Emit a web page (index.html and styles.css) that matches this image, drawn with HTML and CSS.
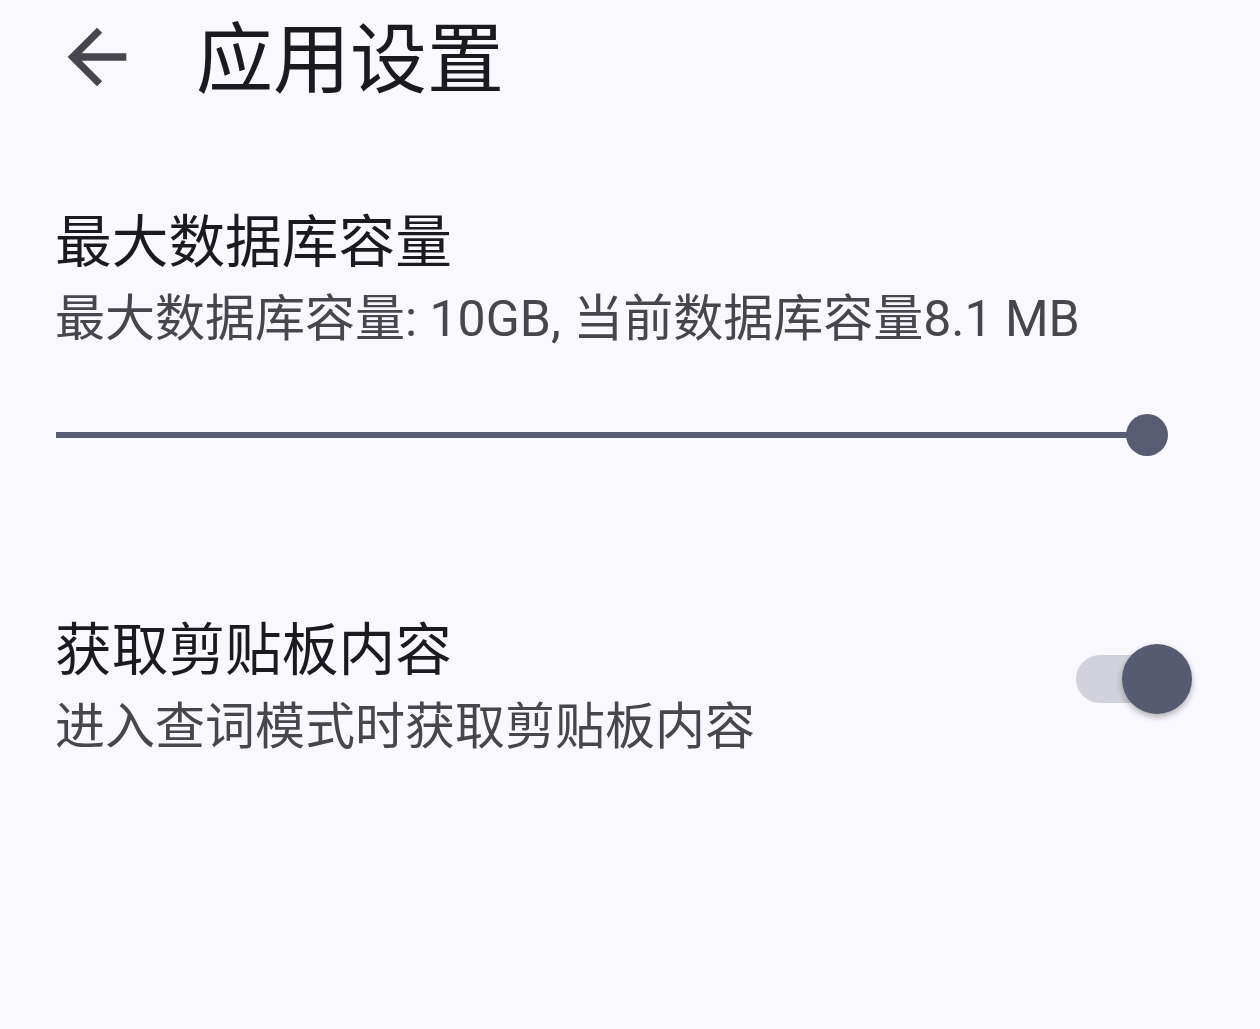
FILE: index.html
```html
<!DOCTYPE html>
<html>
<head>
    <title>应用设置</title>
    <meta name="viewport" content="width=device-width, initial-scale=1">
    <link rel="stylesheet" href="styles.css">
</head>
<body>
    <header class="top-bar">
        <button class="back" aria-label="返回">
            <svg viewBox="0 0 24 24" width="88" height="88">
                <path d="M20 11H7.83l5.59-5.59L12 4l-8 8 8 8 1.41-1.41L7.83 13H20v-2z" fill="#46464f"/>
            </svg>
        </button>
        <h1>应用设置</h1>
    </header>

    <section class="pref pref-slider">
        <div class="pref-title">最大数据库容量</div>
        <div class="pref-summary">最大数据库容量: 10GB, 当前数据库容量8.1 MB</div>
        <div class="slider">
            <div class="slider-track"></div>
            <div class="slider-thumb"></div>
        </div>
    </section>

    <section class="pref pref-switch">
        <div class="pref-text">
            <div class="pref-title">获取剪贴板内容</div>
            <div class="pref-summary">进入查词模式时获取剪贴板内容</div>
        </div>
        <div class="switch">
            <div class="switch-track"></div>
            <div class="switch-thumb"></div>
        </div>
    </section>
</body>
</html>
```

FILE: styles.css
```css
body {
    margin: 0;
    background-color: #f9f8fe;
    font-family: Roboto, "Noto Sans CJK SC", sans-serif;
    color: #1b1b1f;
}
.top-bar {
    height: 114px;
    display: flex;
    align-items: center;
}
.back {
    background: none;
    border: none;
    padding: 0;
    margin-left: 53px;
    width: 88px;
    height: 88px;
    display: flex;
}
h1 {
    margin: 0 0 0 55px;
    padding-top: 10px;
    font-size: 77px;
    font-weight: normal;
    line-height: 1.45;
}
.pref {
    padding: 0 68px 0 55px;
}
.pref-title {
    padding-top: 5px;
    font-size: 56.7px;
    line-height: 76px;
    color: #1b1b1f;
}
.pref-summary {
    font-size: 50px;
    line-height: 76px;
    color: #46464f;
}
.pref-slider {
    margin-top: 86px;
}
.slider {
    position: relative;
    height: 60px;
    margin-top: 48px;
    margin-right: 24px;
    margin-left: 1px;
}
.slider-track {
    position: absolute;
    left: 0;
    right: 21px;
    top: 27px;
    height: 6px;
    background-color: #585c72;
}
.slider-thumb {
    position: absolute;
    right: 0;
    top: 9px;
    width: 42px;
    height: 42px;
    border-radius: 50%;
    background-color: #585c72;
}
.pref-switch {
    margin-top: 143px;
    display: flex;
    align-items: center;
    justify-content: space-between;
}
.switch {
    position: relative;
    width: 116px;
    height: 70px;
    margin-top: -15px;
}
.switch-track {
    position: absolute;
    left: 0;
    right: 12px;
    top: 11px;
    height: 48px;
    border-radius: 24px;
    background-color: #d2d2dc;
}
.switch-thumb {
    position: absolute;
    right: 0;
    top: 0;
    width: 70px;
    height: 70px;
    border-radius: 50%;
    background-color: #575b71;
    box-shadow: 0 3px 6px rgba(0, 0, 0, 0.3);
}
```
